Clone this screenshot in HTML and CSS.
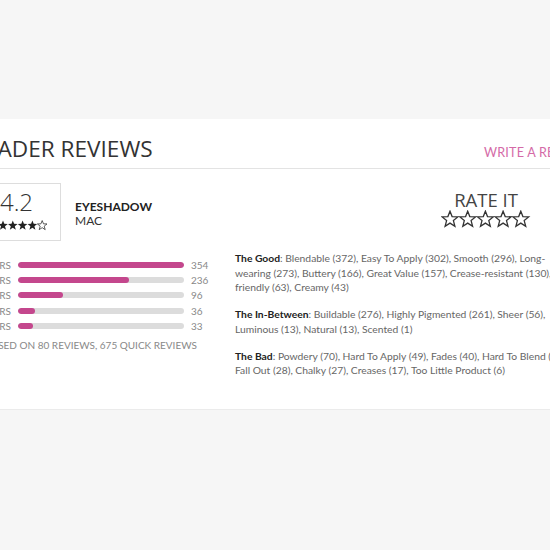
FILE: index.html
```html
<!DOCTYPE html>
<html>
<head>
<meta charset="utf-8">
<link rel="stylesheet" href="styles.css">
</head>
<body>
<div class="top-band"></div>
<section class="panel">
  <div class="inner">
    <header class="head">
      <h2 class="title">READER REVIEWS</h2>
      <a class="write">WRITE A REVIEW</a>
    </header>
    <div class="main">
      <div class="left">
        <div class="summary">
          <div class="score-box">
            <div class="score">4.2</div>
            <div class="mini-stars">
              <svg viewBox="0 0 50 10" width="50" height="10.5">
                <defs>
                  <path id="s" d="M5 0.3 L6.3 3.6 L9.8 3.7 L7 5.9 L8 9.4 L5 7.4 L2 9.4 L3 5.9 L0.2 3.7 L3.7 3.6 Z"/>
                </defs>
                <use href="#s" x="0" fill="#222"/>
                <use href="#s" x="9.8" fill="#222"/>
                <use href="#s" x="19.6" fill="#222"/>
                <use href="#s" x="29.4" fill="#222"/>
                <use href="#s" x="39.2" fill="none" stroke="#333" stroke-width="0.8"/>
              </svg>
            </div>
          </div>
          <div class="product">
            <div class="pname">EYESHADOW</div>
            <div class="brand">MAC</div>
          </div>
        </div>
        <div class="bars">
          <div class="bar-row"><span class="blabel">5 STARS</span><span class="track"><span class="fill" style="width:100%"></span></span><span class="count">354</span></div>
          <div class="bar-row"><span class="blabel">4 STARS</span><span class="track"><span class="fill" style="width:66.7%"></span></span><span class="count">236</span></div>
          <div class="bar-row"><span class="blabel">3 STARS</span><span class="track"><span class="fill" style="width:27.1%"></span></span><span class="count">96</span></div>
          <div class="bar-row"><span class="blabel">2 STARS</span><span class="track"><span class="fill" style="width:10.2%"></span></span><span class="count">36</span></div>
          <div class="bar-row"><span class="blabel">1 STARS</span><span class="track"><span class="fill" style="width:9.3%"></span></span><span class="count">33</span></div>
        </div>
        <div class="based">BASED ON 80 REVIEWS, 675 QUICK REVIEWS</div>
      </div>
      <div class="right">
        <div class="rate">
          <div class="rate-title">RATE IT</div>
          <svg class="rate-stars" viewBox="0 0 90 18" width="90" height="18">
            <defs>
              <path id="o" d="M9 1.2 L11.1 6.6 L16.9 6.9 L12.4 10.6 L13.9 16.3 L9 13.1 L4.1 16.3 L5.6 10.6 L1.1 6.9 L6.9 6.6 Z"/>
            </defs>
            <g fill="none" stroke="#333" stroke-width="1.3" stroke-linejoin="miter">
              <use href="#o" x="0"/>
              <use href="#o" x="17.7"/>
              <use href="#o" x="35.4"/>
              <use href="#o" x="53.1"/>
              <use href="#o" x="70.8"/>
            </g>
          </svg>
        </div>
        <div class="tags">
          <p class="good"><b>The Good</b>: Blendable (372), Easy To Apply (302), Smooth (296), Long-<br>wearing (273), Buttery (166), Great Value (157), Crease-resistant (130), Travel-friendly (63), Creamy (43)</p>
          <p><b>The In-Between</b>: Buildable (276), Highly Pigmented (261), Sheer (56), Luminous (13), Natural (13), Scented (1)</p>
          <p><b>The Bad</b>: Powdery (70), Hard To Apply (49), Fades (40), Hard To Blend (32), Fall Out (28), Chalky (27), Creases (17), Too Little Product (6)</p>
        </div>
      </div>
    </div>
  </div>
</section>
</body>
</html>
```
FILE: styles.css
```css
html, body {
  margin: 0;
  padding: 0;
}
body {
  background: #f6f6f6;
  width: 550px;
  height: 550px;
  overflow: hidden;
  font-family: "Lato", "Open Sans", sans-serif;
}
.top-band {
  height: 119px;
}
.panel {
  background: #fff;
  height: 290px;
  border-bottom: 1px solid #ebebeb;
  overflow: hidden;
}
.inner {
  margin-left: -29px;
  width: 640px;
}
.head {
  display: grid;
  grid-template-columns: 513px auto;
  align-items: baseline;
  border-bottom: 1px solid #e3e3e3;
  padding-top: 17px;
  height: 50px;
  box-sizing: border-box;
}
.title {
  margin: 0;
  font-family: "Open Sans", sans-serif;
  font-weight: 400;
  font-size: 22.6px;
  line-height: 26px;
  color: #333;
  white-space: nowrap;
}
.write {
  font-family: "Lato", sans-serif;
  font-size: 12.6px;
  color: #d46aa7;
  white-space: nowrap;
  letter-spacing: 0.2px;
}
.main {
  display: grid;
  grid-template-columns: 264px 1fr;
}
.left {
  padding-top: 14px;
}
.summary {
  display: flex;
  align-items: center;
  gap: 14px;
}
.score-box {
  width: 90px;
  height: 58px;
  box-sizing: border-box;
  border: 1px solid #ddd;
  border-left: none;
  text-align: center;
  padding-top: 4px;
}
.score {
  font-family: "Open Sans", sans-serif;
  font-weight: 300;
  font-size: 24px;
  line-height: 28px;
  color: #333;
  padding-left: 2px;
}
.mini-stars {
  line-height: 0;
  padding-left: 14px;
  padding-top: 4px;
}
.product {
  color: #333;
  font-size: 12px;
  line-height: 14px;
  margin-top: 3px;
}
.pname {
  font-weight: 700;
  color: #222;
}
.bars {
  margin-top: 18px;
  display: flex;
  flex-direction: column;
  gap: 3px;
}
.bar-row {
  display: flex;
  align-items: center;
  height: 12.2px;
  font-size: 10px;
  color: #888;
}
.blabel {
  width: 40px;
  text-align: right;
  white-space: nowrap;
}
.track {
  margin-left: 7px;
  width: 166px;
  height: 6px;
  border-radius: 3px;
  background: #dcdcdc;
  overflow: hidden;
}
.fill {
  display: block;
  height: 100%;
  border-radius: 3px;
  background: #c4478d;
}
.count {
  margin-left: 7px;
}
.based {
  margin-top: 7px;
  margin-left: 14px;
  font-size: 10px;
  color: #888;
  white-space: nowrap;
}
.right {
  padding-top: 21px;
}
.rate {
  margin-left: 201px;
  width: 100px;
  text-align: center;
}
.rate-title {
  font-family: "Open Sans", sans-serif;
  font-size: 18.5px;
  line-height: 20px;
  color: #444;
}
.rate-stars {
  display: block;
  margin-left: 5px;
}
.tags {
  margin-top: 23px;
  width: 347px;
  font-size: 10.3px;
  line-height: 14.5px;
  color: #666;
}
.tags p {
  margin: 0 0 12.5px 0;
}
.tags .good {
  width: 362px;
}
.tags b {
  color: #222;
  font-weight: 700;
}
```
